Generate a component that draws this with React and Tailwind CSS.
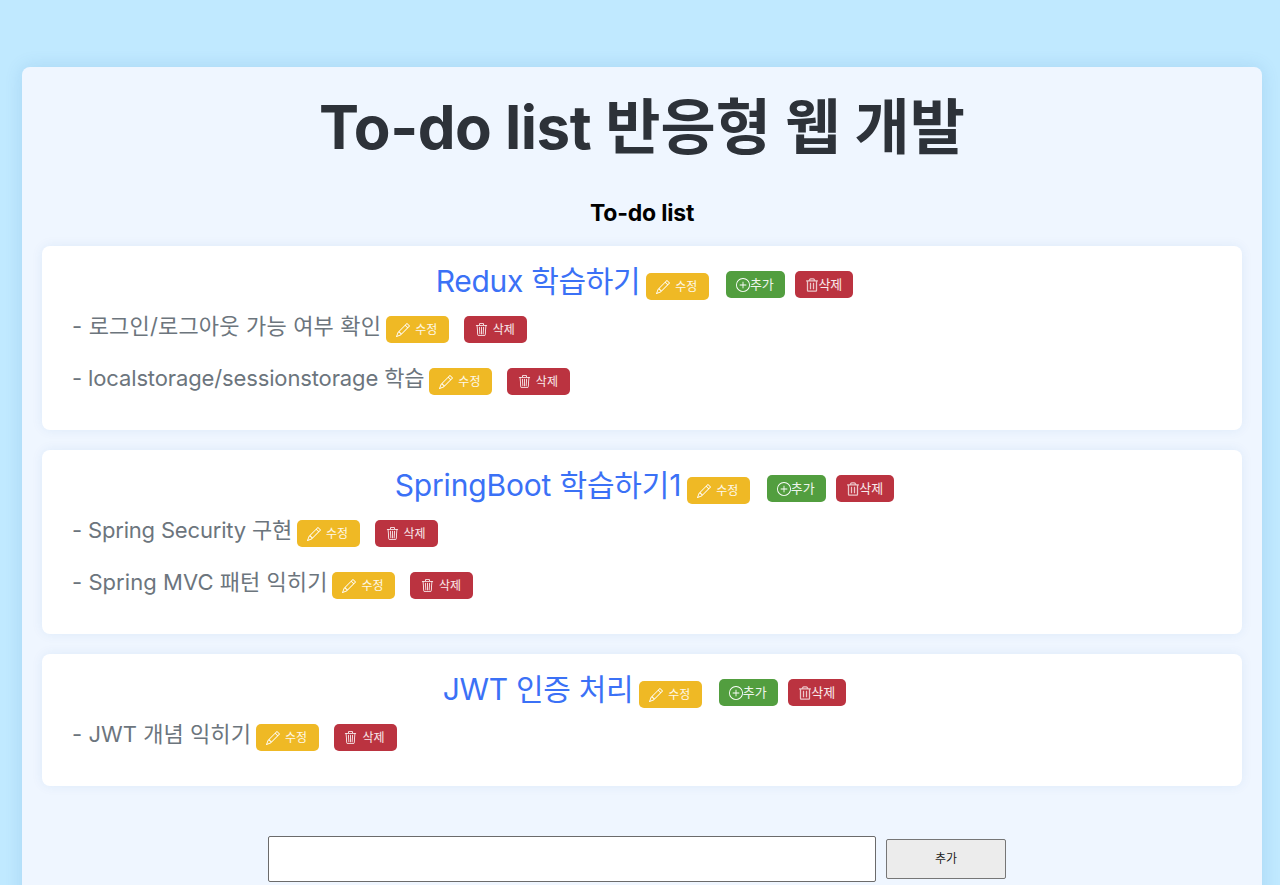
import React from 'react';
import { BsPencil, BsPlusCircle, BsTrash3 } from 'react-icons/bs';
import { FaRegTrashAlt } from 'react-icons/fa';

const todos = [
  {
    title: 'Redux 학습하기',
    spacing: 'tracking-[-0.3px]',
    items: [
      { text: '로그인/로그아웃 가능 여부 확인', spacing: 'tracking-[0.17px]' },
      { text: 'localstorage/sessionstorage 학습', spacing: 'tracking-[-0.13px]' },
    ],
  },
  {
    title: 'SpringBoot 학습하기1',
    spacing: 'tracking-[-0.17px]',
    items: [
      { text: 'Spring Security 구현', spacing: 'tracking-[-0.18px]' },
      { text: 'Spring MVC 패턴 익히기', spacing: 'tracking-[0.05px]' },
    ],
  },
  {
    title: 'JWT 인증 처리',
    spacing: 'tracking-[-0.3px]',
    items: [{ text: 'JWT 개념 익히기', spacing: 'tracking-[0.05px]' }],
  },
];

function EditButton({ className }) {
  return (
    <button className={`flex items-center justify-center gap-[5px] w-[63px] h-[27px] pr-[2px] rounded-[5px] bg-[#efb925] text-white/90 text-xs shrink-0 ${className}`}>
      <BsPencil className="w-[14px] h-[14px] text-white" />
      수정
    </button>
  );
}

function TodoCard({ title, spacing, items }) {
  return (
    <div className="bg-white rounded-lg shadow-[0_0_12px_rgba(30,90,180,0.08)] px-[30px] pt-[15px] pb-[16px]">
      {/* Title row */}
      <div className="flex justify-center items-start h-[41px] pl-[5px]">
        <h3 className={`text-[30px] leading-[40px] text-[#3b71f6] ${spacing}`}>{title}</h3>
        <EditButton className="ml-[6px] mt-[12px]" />
        <button className="flex items-center justify-center w-[59px] h-[27px] pr-[2px] ml-[17px] mt-[10px] rounded-[5px] bg-[#529e3f] text-white/90 text-[13px]">
          <BsPlusCircle className="w-[14px] h-[14px] text-white" />
          추가
        </button>
        <button className="flex items-center justify-center w-[58px] h-[27px] ml-[10px] mt-[10px] rounded-[5px] bg-[#bb3340] text-white/90 text-[13px]">
          <FaRegTrashAlt className="w-[12px] h-[14px] opacity-80" />
          삭제
        </button>
      </div>
      {/* Sub items */}
      <div className="flex flex-col mt-[8px]">
        {items.map((item) => (
          <div key={item.text} className="flex items-start h-[52px]">
            <span className={`text-[22px] leading-[33px] text-[#6c757d] ${item.spacing}`}>- {item.text}</span>
            <EditButton className="ml-[5px] mt-[6px]" />
            <button className="flex items-center justify-center gap-[5px] w-[63px] h-[27px] pr-[2px] ml-[15px] mt-[6px] rounded-[5px] bg-[#bb3340] text-white/90 text-xs">
              <BsTrash3 className="w-[13px] h-[13px] text-white" />
              삭제
            </button>
          </div>
        ))}
      </div>
    </div>
  );
}

export default function App() {
  return (
    <div className="h-[885px] overflow-hidden bg-[#c0e9ff] pl-[22px] pr-[18px] pt-[67px] font-['Inter','Noto_Sans_CJK_KR',sans-serif]">
      <div className="bg-[#eff6ff] rounded-lg shadow-[0_0_18px_rgba(20,100,170,0.14)] px-5 pb-8">
        <h1 className="text-center text-[60px] leading-[72px] pt-6 font-bold text-[#2d3239]">
          <span className="tracking-[-0.5px]">To-do list</span> 반응형 웹 개발
        </h1>
        <h2 className="text-center text-[23px] leading-[32px] mt-[34px] font-bold tracking-[-0.2px] text-black">To-do list</h2>
        <div className="flex flex-col gap-5 mt-[17px]">
          {todos.map((todo) => (
            <TodoCard key={todo.title} title={todo.title} spacing={todo.spacing} items={todo.items} />
          ))}
        </div>
        <div className="flex justify-center items-center gap-[10px] mt-[50px] pr-[10px]">
          <input className="w-[608px] h-[46px] bg-white border border-[#6b6b6b] rounded-[2px]" />
          <button className="w-[120px] h-[40px] bg-[#ececec] border border-[#767676] rounded-[2px] text-xs text-black/90">추가</button>
        </div>
      </div>
    </div>
  );
}
